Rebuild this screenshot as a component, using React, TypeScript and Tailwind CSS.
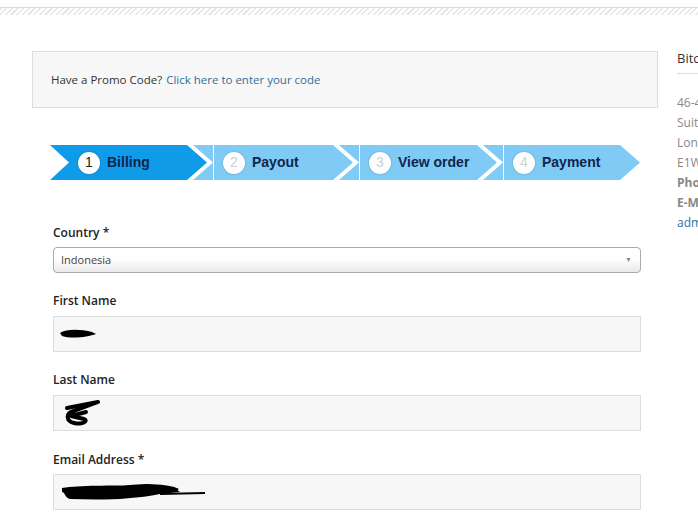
import { Fragment } from 'react';

const steps = [
  { n: 1, label: 'Billing', width: 'w-[157px]', active: true },
  { n: 2, label: 'Payout', width: 'w-[160px]', active: false },
  { n: 3, label: 'View order', width: 'w-[158px]', active: false },
  { n: 4, label: 'Payment', width: 'w-[157px]', active: false },
];

function Scribble({ kind }: { kind: 'first' | 'last' | 'email' }) {
  if (kind === 'first') {
    return (
      <svg width="40" height="14" viewBox="0 0 40 14">
        <path d="M2 6 C8 2, 22 2, 34 5 L38 7 C30 10, 14 12, 4 9 Z" fill="#000" />
      </svg>
    );
  }
  if (kind === 'last') {
    return (
      <svg width="42" height="28" viewBox="0 0 42 28">
        <path
          d="M5 9 L36 3 L12 12 C3 14, 4 22, 12 24 C20 26, 27 22, 22 20 L9 17 L24 13"
          fill="none"
          stroke="#000"
          strokeWidth="4"
          strokeLinecap="round"
          strokeLinejoin="round"
        />
      </svg>
    );
  }
  return (
    <svg width="146" height="20" viewBox="0 0 146 20">
      <path d="M2 6 C20 3, 50 4, 80 3 C100 2, 115 6, 120 10 L100 12 C70 18, 40 18, 10 17 C4 15, 6 11, 2 10 Z" fill="#000" />
      <path d="M60 6 C80 2, 108 3, 118 8" fill="none" stroke="#000" strokeWidth="3" />
      <path d="M100 12 L145 11" fill="none" stroke="#000" strokeWidth="2" />
    </svg>
  );
}

export default function App() {
  return (
    <div className="min-h-screen w-full overflow-hidden bg-white font-['Open_Sans',sans-serif] text-[#333]">
      {/* top stripe */}
      <div className="h-[7px]" />
      <div className="h-[8px] border-t border-[#dcdcdc] bg-[repeating-linear-gradient(135deg,#e6e6e6_0,#e6e6e6_1.5px,#fff_1.5px,#fff_4px)]" />

      <div className="flex pl-[32px] gap-[19px]">
        {/* main column */}
        <div className="w-[626px] shrink-0">
          <div className="mt-[36px] h-[57px] flex items-center pl-[18px] bg-[#f7f7f7] border border-[#ddd] text-[11.5px]">
            <span>Have a Promo Code?</span>
            <span className="ml-[4px] text-[#2f6f9c]">Click here to enter your code</span>
          </div>

          {/* steps */}
          <div className="mt-[37px] ml-[18px] flex font-['Liberation_Sans',Arial,sans-serif]">
            {steps.map((s, i) => (
              <div
                key={s.n}
                className={`${s.width} h-[35px] shrink-0 flex items-center ${
                  i === 0
                    ? 'bg-[#109be8] pl-[28px] [clip-path:polygon(0_0,calc(100%_-_20px)_0,100%_50%,calc(100%_-_20px)_100%,0_100%,19px_50%)]'
                    : 'bg-[#7fcbf5] -ml-[14px] [clip-path:polygon(0_0,calc(100%_-_20px)_0,100%_50%,calc(100%_-_20px)_100%,0_100%,20px_50%)]'
                }`}
              >
                {i > 0 && (
                  <Fragment>
                    <div className="w-[20px] shrink-0 self-stretch" />
                    <div className="w-px shrink-0 self-stretch bg-white" />
                    <div className="w-[9px] shrink-0" />
                  </Fragment>
                )}
                <div
                  className={`w-[22px] h-[22px] shrink-0 rounded-full bg-white flex items-center justify-center text-[14px] shadow-[0_0_2px_rgba(0,0,0,0.25)] ${
                    s.active ? 'text-[#222]' : 'text-[#cfcfcf]'
                  }`}
                >
                  {s.n}
                </div>
                <span className="ml-[7px] text-[14px] font-bold text-[#10264d] whitespace-nowrap">{s.label}</span>
              </div>
            ))}
          </div>

          {/* form */}
          <div className="pl-[21px] pr-[17px] pt-[44px] text-[12px]">
            <div className="h-[18px] leading-[18px] font-semibold text-[#222]">Country *</div>
            <div className="mt-[5px] h-[26px] flex items-center justify-between rounded-[4px] border border-[#aaa] bg-[linear-gradient(#fff_0%,#fff_45%,#e9e9e9_100%)] pl-[7px] pr-[8px]">
              <span className="text-[11px] text-[#444]">Indonesia</span>
              <span className="text-[7px] text-[#888]">▼</span>
            </div>

            <div className="mt-[19px] h-[18px] leading-[18px] font-semibold text-[#222]">First Name</div>
            <div className="mt-[6px] h-[36px] flex items-center pl-[4px] border border-[#ddd] bg-[#f7f7f7]">
              <Scribble kind="first" />
            </div>

            <div className="mt-[19px] h-[18px] leading-[18px] font-semibold text-[#222]">Last Name</div>
            <div className="mt-[6px] h-[36px] flex items-center pl-[8px] border border-[#ddd] bg-[#f7f7f7]">
              <Scribble kind="last" />
            </div>

            <div className="mt-[20px] h-[18px] leading-[18px] font-semibold text-[#222]">Email Address *</div>
            <div className="mt-[5px] h-[36px] flex items-center pl-[6px] border border-[#ddd] bg-[#f7f7f7]">
              <Scribble kind="email" />
            </div>
          </div>
        </div>

        {/* sidebar */}
        <div className="w-[240px] shrink-0 pt-[34px]">
          <div className="pb-[6px] border-b border-[#ddd] text-[13px] leading-[18px] text-[#333] whitespace-nowrap">
            Bitcoin Exchange Indonesia
          </div>
          <div className="mt-[19px] text-[12px] leading-[20px] text-[#888] whitespace-nowrap">
            <div>46-48 East Smithfield</div>
            <div>Suite 25</div>
            <div>London</div>
            <div>E1W 1AW</div>
            <div className="font-bold">Phone: +44 20 3000 0000</div>
            <div className="font-bold">E-Mail:</div>
            <div className="text-[#2f6f9c]">admin@example.com</div>
          </div>
        </div>
      </div>
    </div>
  );
}
